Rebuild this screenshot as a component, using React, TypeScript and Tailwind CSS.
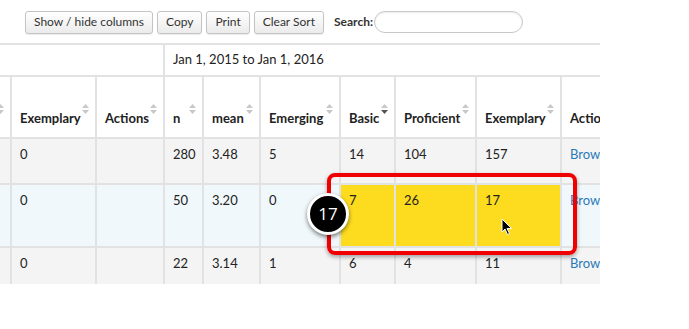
import React from "react";

const font = { fontFamily: "Lato, 'Open Sans', sans-serif" };

function SortIcon({ active }: { active?: boolean }) {
  return (
    <svg width="7" height="10" viewBox="0 0 7 10" className="absolute right-[6px] top-[27px]">
      <path d="M3.5 0 L7 4 L0 4 Z" fill="#c8c8c8" />
      <path d="M0 6 L7 6 L3.5 10 Z" fill={active ? "#555" : "#c8c8c8"} />
    </svg>
  );
}

const headers = [
  { label: "", w: 11 },
  { label: "Exemplary", w: 85 },
  { label: "Actions", w: 68 },
  { label: "n", w: 39 },
  { label: "mean", w: 57 },
  { label: "Emerging", w: 80 },
  { label: "Basic", w: 55, active: true },
  { label: "Proficient", w: 81 },
  { label: "Exemplary", w: 85 },
  { label: "Actions", w: 70 },
];

const rows = [
  { bg: "bg-[#f4f4f4]", h: "h-[46px]", cells: ["", "0", "", "280", "3.48", "5", "14", "104", "157", "Browse"] },
  { bg: "bg-[#f1f8fb]", h: "h-[63px]", cells: ["", "0", "", "50", "3.20", "0", "7", "26", "17", "Browse"] },
  { bg: "bg-[#f4f4f4]", h: "h-[37px]", cells: ["", "0", "", "22", "3.14", "1", "6", "4", "11", "Browse"] },
];

function Button({ children }: { children: React.ReactNode }) {
  return (
    <button className="h-[23px] rounded-[3px] border border-[#c4c4c4] bg-gradient-to-b from-white to-[#ebebeb] px-[8px] text-[12px] text-[#333] shadow-[0_1px_1px_rgba(0,0,0,0.08)]">
      {children}
    </button>
  );
}

export default function App() {
  return (
    <div className="relative h-[329px] w-[689px] overflow-hidden bg-white text-[13px] text-[#222]" style={font}>
      {/* toolbar */}
      <div className="flex h-[43px] items-center gap-[4px] pl-[25px] pt-[1px]">
        <Button>Show / hide columns</Button>
        <Button>Copy</Button>
        <Button>Print</Button>
        <Button>Clear Sort</Button>
        <span className="ml-[6px] text-[12px] font-bold text-[#333]">Search:</span>
        <div className="-ml-[3px] h-[22px] w-[149px] rounded-full border border-[#c8c8c8] bg-white shadow-[inset_0_1px_2px_rgba(0,0,0,0.08)]" />
      </div>

      {/* table */}
      <div className="w-[600px] overflow-hidden">
        <table className="table-fixed border-collapse" style={{ width: 631 }}>
          <colgroup>
            {headers.map((h, i) => (
              <col key={i} style={{ width: h.w }} />
            ))}
          </colgroup>
          <thead>
            <tr className="h-[32px]">
              <th colSpan={3} className="border-t-[2px] border-[#e2e2e2]" />
              <th colSpan={7} className="border-l-[2px] border-t-[2px] border-[#e2e2e2] px-[8px] text-left font-normal">
                Jan 1, 2015 to Jan 1, 2016
              </th>
            </tr>
            <tr className="h-[62px]">
              {headers.map((h, i) => (
                <th
                  key={i}
                  className="relative overflow-hidden whitespace-nowrap border-[2px] border-[#e2e2e2] pb-[9px] pl-[8px] text-left align-bottom font-bold first:border-l-0"
                >
                  {h.label}
                  <SortIcon active={h.active} />
                </th>
              ))}
            </tr>
          </thead>
          <tbody>
            {rows.map((r, ri) => (
              <tr key={ri} className={`${r.bg} ${r.h}`}>
                {r.cells.map((c, ci) => (
                  <td
                    key={ci}
                    className={`overflow-hidden whitespace-nowrap border-[2px] border-[#e2e2e2] pl-[8px] pt-[6px] align-top first:border-l-0 ${
                      ri === 2 ? "border-b-0" : ""
                    } ${ri === 1 && ci >= 6 && ci <= 8 ? "bg-[#fddc1f]" : ""} ${ci === 9 ? "text-[#2a7ab8]" : ""}`}
                  >
                    {c}
                  </td>
                ))}
              </tr>
            ))}
          </tbody>
        </table>
      </div>

      {/* highlight frame */}
      <div className="absolute left-[327px] top-[173px] h-[82px] w-[250px] rounded-[8px] border-[4px] border-[#f00000] shadow-[0_2px_4px_rgba(0,0,0,0.35)]" />

      {/* step badge */}
      <div className="absolute left-[307px] top-[193px] flex h-[42px] w-[42px] items-center justify-center rounded-full border-[3px] border-white bg-black text-[17px] text-white shadow-[0_2px_4px_rgba(0,0,0,0.5)]" style={{ fontFamily: "'Open Sans', sans-serif" }}>
        17
      </div>

      {/* cursor */}
      <svg className="absolute left-[501px] top-[218px]" width="12" height="18" viewBox="0 0 12 18">
        <path d="M1 1 L1 14 L4 11 L6.5 16.5 L8.5 15.5 L6 10.5 L10.5 10.5 Z" fill="#000" stroke="#fff" strokeWidth="1" />
      </svg>
    </div>
  );
}
